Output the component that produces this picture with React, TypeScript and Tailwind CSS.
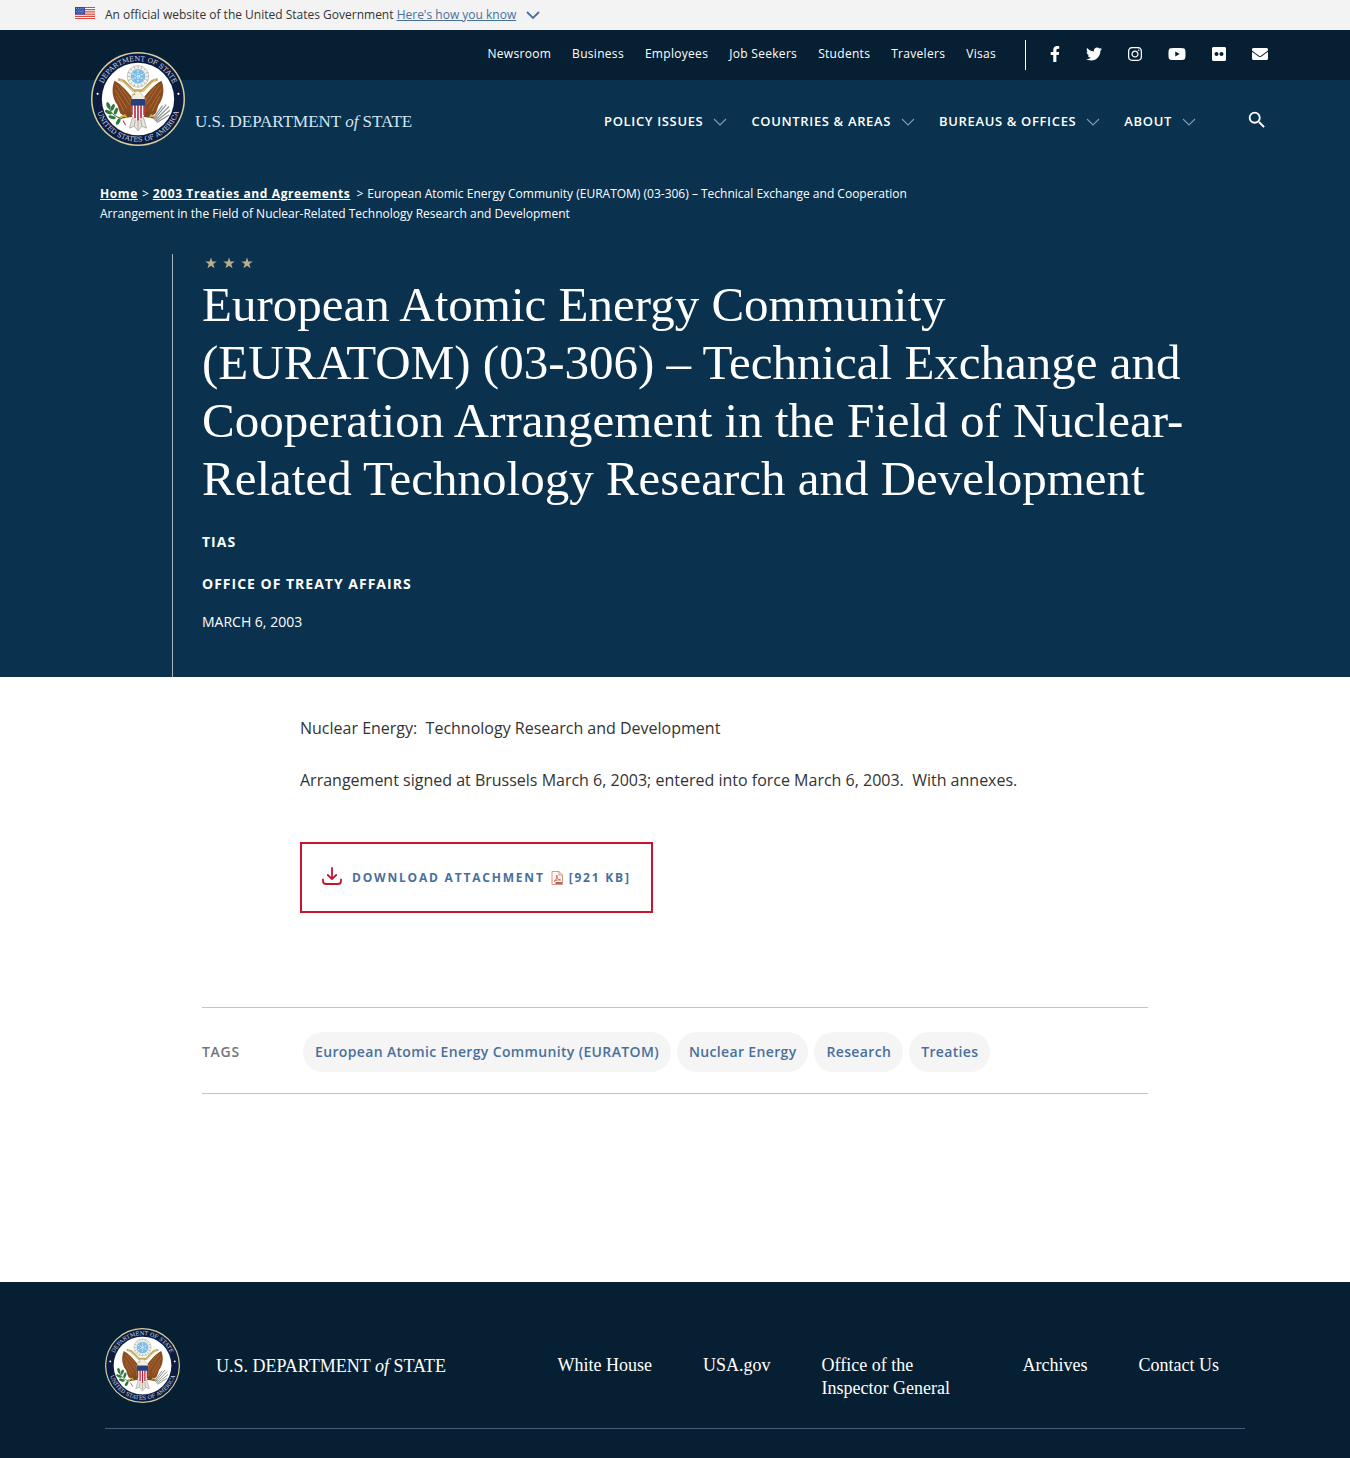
import { useId } from "react";
import {
  FaEnvelope,
  FaFacebookF,
  FaFlickr,
  FaInstagram,
  FaTwitter,
  FaYoutube,
} from "react-icons/fa";
import { MdSearch } from "react-icons/md";

const utilityLinks = ["Newsroom", "Business", "Employees", "Job Seekers", "Students", "Travelers", "Visas"];

const socialLinks = [
  { label: "Facebook", Icon: FaFacebookF, width: "w-2.5" },
  { label: "Twitter", Icon: FaTwitter, width: "w-4" },
  { label: "Instagram", Icon: FaInstagram, width: "w-3.5" },
  { label: "YouTube", Icon: FaYoutube, width: "w-[18px]" },
  { label: "Flickr", Icon: FaFlickr, width: "w-3.5" },
  { label: "Email", Icon: FaEnvelope, width: "w-4" },
];

const menuItems = ["Policy Issues", "Countries & Areas", "Bureaus & Offices", "About"];

const tags = ["European Atomic Energy Community (EURATOM)", "Nuclear Energy", "Research", "Treaties"];

function Seal({ className }: { className: string }) {
  const id = useId();
  const rays = Array.from({ length: 16 }, (_, i) => i * 22.5);
  const wing = (
    <>
      <path d="M45 50 C41 45 34 35 25 30.5 C21.5 39 22.5 49 28 56 C30 61 30 66 34 67 C39 67 43 64 45 60 Z" fill="#8a4b20" />
      <path d="M27 35 L41 56 M25.5 40 L38 60 M27 47 L35 63 M31 36 L43 53" stroke="#b97a3d" strokeWidth="0.8" fill="none" />
    </>
  );
  return (
    <svg viewBox="0 0 100 100" className={className} role="img" aria-label="Department of State, United States of America seal">
      <defs>
        <path id={`${id}t`} d="M9.5 50 A40.5 40.5 0 0 1 90.5 50" />
        <path id={`${id}b`} d="M4.5 50 A45.5 45.5 0 0 0 95.5 50" />
      </defs>
      <circle cx="50" cy="50" r="50" fill="#d9cf9f" />
      <circle cx="50" cy="50" r="48.4" fill="#0b1c3f" />
      <circle cx="50" cy="50" r="38.5" fill="#ffffff" />
      <g fill="#cdd6e4" fontFamily="'DejaVu Serif', serif" fontSize="7.2" textAnchor="middle">
        <text>
          <textPath href={`#${id}t`} startOffset="50%">DEPARTMENT OF STATE</textPath>
        </text>
        <text>
          <textPath href={`#${id}b`} startOffset="50%">UNITED STATES OF AMERICA</textPath>
        </text>
      </g>
      <circle cx="7" cy="44.5" r="1.2" fill="#ffffff" />
      <circle cx="93" cy="44.5" r="1.2" fill="#ffffff" />

      {/* glory */}
      <circle cx="50" cy="26" r="11.5" fill="#f1f2ee" stroke="#b9bbb8" strokeWidth="0.8" />
      {rays.map((a) => (
        <path key={a} d="M50 17.5 V14.5" stroke="#a8a99f" strokeWidth="0.8" transform={`rotate(${a} 50 26)`} />
      ))}
      <circle cx="50" cy="26" r="7.8" fill="#7dbde6" />
      <path d="M50 19.5 V32.5 M44 23 L56 29 M44 29 L56 23" stroke="#e6f4fc" strokeWidth="1.3" strokeDasharray="1.4 1.2" />

      {/* wings */}
      {wing}
      <g transform="translate(100 0) scale(-1 1)">{wing}</g>

      {/* scroll */}
      <path d="M29 29 L35 31 L45 41 L55 41 L65 31 L71 29" fill="none" stroke="#c3a55a" strokeWidth="3" />
      <path d="M31 29.5 L46 42.5 M69 29.5 L54 42.5" fill="none" stroke="#efe0a6" strokeWidth="1" />

      {/* legs and tail */}
      <path d="M44 62 L36 66 L32 71 L38 70 L45 69 Z M56 62 L64 66 L68 71 L62 70 L55 69 Z" fill="#7b4a22" />
      <path d="M30 70 L36 67 L38 70 M70 70 L64 67 L62 70" fill="none" stroke="#d6a83e" strokeWidth="1.6" />
      <path d="M44 70 L41 81 L46 79 L50 84 L54 79 L59 81 L56 70 Z" fill="#e7e4df" stroke="#9a9389" strokeWidth="0.7" />
      <path d="M47 72 L46 79 M50 72 V82 M53 72 L54 79" stroke="#9a9389" strokeWidth="0.7" />

      {/* head and neck */}
      <path d="M43 51 C44 46 44 43 48 42 C52 41 54 44 54 46 C57 47 58 49 57 52 Z" fill="#f1eee6" stroke="#b9ae98" strokeWidth="0.6" />
      <path d="M47 43.5 L43.5 45.5 L47 46 Z" fill="#d6a83e" />

      {/* shield */}
      <path d="M42.5 50 H57.5 V64 C57.5 69 53 71 50 73 C47 71 42.5 69 42.5 64 Z" fill="#ffffff" />
      <path d="M43.5 56 V67 M46.8 56 V70.5 M50 56 V73 M53.2 56 V70.5 M56.5 56 V67" stroke="#b3263a" strokeWidth="1.7" />
      <path d="M42.5 50 H57.5 V57 H42.5 Z" fill="#24407f" />

      {/* olive branch */}
      <path d="M18 56 C20 64 25 69 33 71" fill="none" stroke="#2f6b35" strokeWidth="1" />
      <g fill="#2e7a3c">
        <ellipse cx="18.5" cy="57" rx="1.9" ry="3.8" transform="rotate(-20 18.5 57)" />
        <ellipse cx="23" cy="59" rx="1.8" ry="3.8" transform="rotate(25 23 59)" />
        <ellipse cx="18.5" cy="64" rx="1.8" ry="4" transform="rotate(-65 18.5 64)" />
        <ellipse cx="26.5" cy="63" rx="1.8" ry="3.8" transform="rotate(20 26.5 63)" />
        <ellipse cx="22.5" cy="69.5" rx="1.8" ry="4" transform="rotate(-75 22.5 69.5)" />
        <ellipse cx="29" cy="74" rx="1.8" ry="3.8" transform="rotate(30 29 74)" />
      </g>
      <path d="M34 73 L37 78" stroke="#c0453d" strokeWidth="1.1" />

      {/* arrows */}
      <path d="M67 72 L80 56 M68 73 L83 58 M69 74 L84 62 M66 71 L76 57 M70 75 L83 67" stroke="#8f948f" strokeWidth="1.3" />
    </svg>
  );
}

function Flag() {
  return (
    <svg viewBox="0 0 20 12" className="h-3 w-5 shrink-0" role="img" aria-label="U.S. flag">
      <rect width="20" height="12" fill="#ffffff" />
      <path d="M0 0.5 H20 M0 2.7 H20 M0 4.9 H20 M0 7.1 H20 M0 9.3 H20 M0 11.5 H20" stroke="#dc4a3d" strokeWidth="1.2" />
      <rect width="10" height="7.6" fill="#2f4fa5" />
      <path d="M1.2 1.5 H9 M2 3 H9 M1.2 4.5 H9 M2 6 H9" stroke="#b9c6ea" strokeWidth="0.7" strokeDasharray="0.8 1" />
    </svg>
  );
}

function Chevron({ className, weight }: { className: string; weight: number }) {
  return (
    <svg viewBox="0 0 14 8" className={className} fill="none" stroke="currentColor" strokeWidth={weight} aria-hidden="true">
      <path d="M1 1 L7 7 L13 1" />
    </svg>
  );
}

function Star() {
  return (
    <svg viewBox="0 0 24 24" className="size-3" fill="#bfac8c" aria-hidden="true">
      <path d="M12 1 L14.8 9 H23.5 L16.6 14.2 L19.1 22.6 L12 17.6 L4.9 22.6 L7.4 14.2 L0.5 9 H9.2 Z" />
    </svg>
  );
}

function DownloadIcon() {
  return (
    <svg viewBox="0 0 20 18" className="h-[18px] w-5 shrink-0" fill="none" stroke="#c8142d" strokeWidth="1.8" strokeLinecap="round" strokeLinejoin="round" aria-hidden="true">
      <path d="M10 1 V12 M5.8 8 L10 12.2 L14.2 8" />
      <path d="M1 12.5 V14 C1 16 2 17 4 17 H16 C18 17 19 16 19 14 V12.5" />
    </svg>
  );
}

function PdfIcon() {
  return (
    <svg viewBox="0 0 12 14" className="h-3.5 w-3 shrink-0" fill="none" aria-hidden="true">
      <path d="M1 0.5 H8 L11.5 4 V13.5 H1 Z" fill="#fff8f5" stroke="#e0927f" />
      <path d="M8 0.5 V4 H11.5" stroke="#e0927f" />
      <path d="M3 10.5 C5 9.5 6.2 6.5 5.8 4 C5.4 6.5 7 9 9.6 9 C7 8.6 4.6 9.2 3 10.5 Z" stroke="#cf4b3a" strokeWidth="0.8" />
      <path d="M4.5 12 H11" stroke="#8a4a48" strokeWidth="1.6" />
    </svg>
  );
}

function Wordmark({ className }: { className: string }) {
  return (
    <a href="#home" className={`font-['Liberation_Serif',serif] whitespace-nowrap ${className}`}>
      U.S. DEPARTMENT <em>of</em> STATE
    </a>
  );
}

export default function App() {
  return (
    <div className="bg-white font-['Open_Sans',sans-serif] text-[#333333]">
      <div className="bg-[#f3f3f3]">
        <div className="mx-auto flex h-[30px] max-w-[1200px] items-center text-xs">
          <div className="mr-2.5 pb-1">
            <Flag />
          </div>
          <p>
            An official website of the United States Government{" "}
            <button type="button" className="text-[#49709c] underline">
              Here's how you know
            </button>
          </p>
          <Chevron className="ml-2.5 h-2 w-3.5 text-[#49709c]" weight={1.8} />
        </div>
      </div>

      <div className="bg-[#0a314d] text-white">
        <header>
          <div className="bg-[#071f33]">
            <div className="mx-auto flex h-[50px] max-w-[1200px] items-center justify-end pr-[7px]">
              <nav aria-label="Utility" className="flex gap-[21px] pb-0.5 text-xs tracking-wide">
                {utilityLinks.map((link) => (
                  <a key={link} href="#link">
                    {link}
                  </a>
                ))}
              </nav>
              <div className="ml-[29px] flex h-[30px] items-center gap-[26px] border-l border-white pl-6 text-base">
                {socialLinks.map(({ label, Icon, width }) => (
                  <a key={label} href="#social" aria-label={label} className="pb-0.5">
                    <Icon className={width} />
                  </a>
                ))}
              </div>
            </div>
          </div>

          <div className="mx-auto flex h-[83px] max-w-[1200px] items-center justify-between pr-[7px] pl-4">
            <div className="flex items-center gap-2.5">
              <a href="#home" className="relative -mt-[46px] shrink-0">
                <Seal className="size-[94px]" />
              </a>
              <Wordmark className="text-[17px] text-[#d5e6f3]" />
            </div>
            <nav aria-label="Main" className="flex items-center text-[13px] font-semibold">
              <ul className="flex gap-6">
                {menuItems.map((item) => (
                  <li key={item}>
                    <button type="button" className="flex items-center gap-2.5 whitespace-nowrap tracking-wider uppercase">
                      {item}
                      <Chevron className="h-2 w-3.5 text-[#7d9dbb]" weight={1.1} />
                    </button>
                  </li>
                ))}
              </ul>
              <button type="button" aria-label="Search" className="ml-[50px] pb-1">
                <MdSearch className="size-[22px]" />
              </button>
            </nav>
          </div>
        </header>

        <div className="mx-auto max-w-[1200px] px-[25px] pt-[21px]">
          <nav aria-label="Breadcrumb" className="max-w-[840px] text-xs leading-5">
            <a href="#home" className="font-bold tracking-wider underline">
              Home
            </a>
            <span className="mx-1">&gt;</span>
            <a href="#treaties" className="font-bold tracking-wider underline">
              2003 Treaties and Agreements
            </a>
            <span className="mr-1 ml-1.5">&gt;</span>
            European Atomic Energy Community (EURATOM) (03-306) – Technical Exchange and Cooperation Arrangement in
            the Field of Nuclear-Related Technology Research and Development
          </nav>
        </div>

        <div className="mx-auto max-w-[1200px] px-[97px] pt-[30px]">
          <div className="border-l border-[#a9b4b8] pb-[45px] pl-[29px]">
            <div className="flex gap-1.5 pt-[3px] pb-[7px] pl-[3px]">
              <Star />
              <Star />
              <Star />
            </div>
            <h1 className="-mr-4 font-['Liberation_Serif',serif] text-[49px] leading-[58px]">
              European Atomic Energy Community (EURATOM) (03-306) – Technical Exchange and Cooperation Arrangement in
              the Field of Nuclear-Related Technology Research and Development
            </h1>
            <div className="pt-6 text-sm uppercase">
              <p className="font-bold tracking-[1px]">TIAS</p>
              <p className="mt-[22px] font-bold tracking-[1px]">Office of Treaty Affairs</p>
              <p className="mt-[18px]">March 6, 2003</p>
            </div>
          </div>
        </div>
      </div>

      <main>
        <div className="mx-auto max-w-[750px] pt-[38px] text-base leading-[26px]">
          <p>Nuclear Energy:&nbsp; Technology Research and Development</p>
          <p className="mt-[26px]">
            Arrangement signed at Brussels March 6, 2003; entered into force March 6, 2003.&nbsp; With annexes.
          </p>
          <a
            href="#download"
            className="mt-[49px] inline-flex h-[71px] items-center border-2 border-[#c8142d] px-5 text-xs font-bold tracking-[0.15em] text-[#49709c] uppercase"
          >
            <span className="pb-1">
              <DownloadIcon />
            </span>
            <span className="ml-2.5">Download Attachment</span>
            <span className="mx-1.5">
              <PdfIcon />
            </span>
            [921 KB]
          </a>
        </div>

        <section className="mx-auto mt-[94px] flex max-w-[946px] items-center border-y border-[#c4c4c4] pt-6 pb-[21px] text-sm font-semibold">
          <h2 className="w-[101px] shrink-0 tracking-wider text-[#757575]">TAGS</h2>
          <ul className="flex flex-wrap gap-1.5">
            {tags.map((tag) => (
              <li key={tag}>
                <a href="#tag" className="flex h-10 items-center rounded-full bg-[#f5f5f5] px-3 tracking-wide text-[#49709c]">
                  {tag}
                </a>
              </li>
            ))}
          </ul>
        </section>
      </main>

      <footer className="mt-[188px] bg-[#071f33] pb-[29px] text-white">
        <div className="mx-auto flex max-w-[1140px] items-start border-b border-[#475f75] pt-[46px] pb-[25px]">
          <a href="#home" className="shrink-0">
            <Seal className="size-[75px]" />
          </a>
          <Wordmark className="mt-[26px] ml-9 text-lg leading-6" />
          <nav aria-label="Footer" className="mt-[26px] ml-auto pr-[26px] font-['Liberation_Serif',serif] text-lg leading-[23px]">
            <ul className="flex gap-[51px]">
              <li><a href="#white-house">White House</a></li>
              <li><a href="#usa-gov">USA.gov</a></li>
              <li className="w-[150px]"><a href="#oig">Office of the Inspector General</a></li>
              <li><a href="#archives">Archives</a></li>
              <li><a href="#contact">Contact Us</a></li>
            </ul>
          </nav>
        </div>
      </footer>
    </div>
  );
}
